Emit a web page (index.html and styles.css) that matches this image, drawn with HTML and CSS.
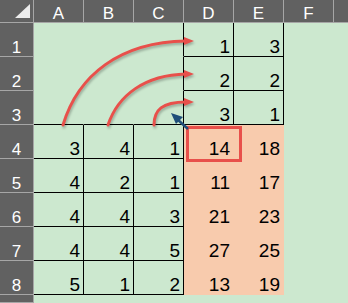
FILE: index.html
```html
<!DOCTYPE html>
<html>
<head>
<meta charset="utf-8">
<link rel="stylesheet" href="styles.css">
</head>
<body>
<div class="sheet">
  <div class="grid">
    <div class="ch corner"><span class="tri"></span></div>
    <div class="ch">A</div><div class="ch">B</div><div class="ch">C</div><div class="ch">D</div><div class="ch">E</div><div class="ch">F</div><div class="ch last"></div>

    <div class="rh">1</div>
    <div class="c"></div><div class="c"></div><div class="c br"></div><div class="c br bb">1</div><div class="c br bb">3</div><div class="c"></div><div class="c"></div>

    <div class="rh">2</div>
    <div class="c"></div><div class="c"></div><div class="c br"></div><div class="c br bb">2</div><div class="c br bb">2</div><div class="c"></div><div class="c"></div>

    <div class="rh">3</div>
    <div class="c bb"></div><div class="c bb"></div><div class="c br bb"></div><div class="c br bb">3</div><div class="c br bb">1</div><div class="c"></div><div class="c"></div>

    <div class="rh">4</div>
    <div class="c br bb">3</div><div class="c br bb">4</div><div class="c br bb">1</div><div class="c pk">14</div><div class="c pk">18</div><div class="c"></div><div class="c"></div>

    <div class="rh">5</div>
    <div class="c br bb">4</div><div class="c br bb">2</div><div class="c br bb">1</div><div class="c pk">11</div><div class="c pk">17</div><div class="c"></div><div class="c"></div>

    <div class="rh">6</div>
    <div class="c br bb">4</div><div class="c br bb">4</div><div class="c br bb">3</div><div class="c pk">21</div><div class="c pk">23</div><div class="c"></div><div class="c"></div>

    <div class="rh">7</div>
    <div class="c br bb">4</div><div class="c br bb">4</div><div class="c br bb">5</div><div class="c pk">27</div><div class="c pk">25</div><div class="c"></div><div class="c"></div>

    <div class="rh">8</div>
    <div class="c br bb">5</div><div class="c br bb">1</div><div class="c br bb">2</div><div class="c pk">13</div><div class="c pk">19</div><div class="c"></div><div class="c"></div>

    <div class="rh"></div>
    <div class="c"></div><div class="c"></div><div class="c"></div><div class="c"></div><div class="c"></div><div class="c"></div><div class="c"></div>
  </div>

  <svg class="overlay" width="348" height="303" viewBox="0 0 348 303">
    <g class="red">
      <path d="M63,125 C78,75 120,42 186,41" />
      <path d="M108,125 C118,95 145,75 186,74" />
      <path d="M154,125 C154,110 162,102 186,102" />
      <polygon points="184,37 194,41 184,45" />
      <polygon points="184,70 194,74 184,78" />
      <polygon points="184,98 194,102 184,106" />
    </g>
    <rect class="box" x="187.5" y="127.5" width="53" height="33" />
    <path class="blue" d="M188,129 L177,119" />
    <polygon class="bluehead" points="171,113 183,117 176,124" />
  </svg>
</div>
</body>
</html>
```

FILE: styles.css
```css
html, body {
  margin: 0;
  padding: 0;
  background: #cce8cf;
}

.sheet {
  position: relative;
  width: 348px;
  height: 303px;
  overflow: hidden;
}

.grid {
  display: grid;
  grid-template-columns: 34px repeat(6, 50px) 14px;
  grid-template-rows: 23px repeat(8, 34px) 8px;
  width: 348px;
  height: 303px;
}

.grid > div {
  box-sizing: border-box;
  display: flex;
  align-items: flex-end;
  line-height: 1;
}

.ch, .rh {
  background: #616161;
  color: #ffffff;
  font-family: "Liberation Sans", Arial, sans-serif;
  font-size: 17px;
  justify-content: center;
  border-right: 1px solid #a6a6a6;
  border-bottom: 1px solid #a6a6a6;
}

.ch.last {
  border-right: none;
}

.corner {
  position: relative;
}

.tri {
  position: absolute;
  left: 15px;
  top: 4px;
  width: 0;
  height: 0;
  border-left: 15px solid transparent;
  border-bottom: 14px solid #ececec;
}

.c {
  background: #cce8cf;
  color: #000000;
  font-family: "Liberation Sans", Arial, sans-serif;
  font-size: 19px;
  justify-content: flex-end;
  padding-right: 3px;
  border: 0 solid transparent;
  border-right-width: 1px;
  border-bottom-width: 1px;
}

.c.br {
  border-right-color: #000000;
}

.c.bb {
  border-bottom-color: #000000;
}

.c.pk {
  background: #f8cbad;
}

.overlay {
  position: absolute;
  left: 0;
  top: 0;
  pointer-events: none;
}

.red {
  filter: drop-shadow(1px 2px 1px rgba(0, 0, 0, 0.25));
}

.red path {
  fill: none;
  stroke: #e8504b;
  stroke-width: 3;
  stroke-linecap: round;
}

.red polygon {
  fill: #e8504b;
}

.box {
  fill: none;
  stroke: #e8504b;
  stroke-width: 3;
}

.blue {
  stroke: #1f4e79;
  stroke-width: 2.5;
  fill: none;
}

.bluehead {
  fill: #1f4e79;
}
```
